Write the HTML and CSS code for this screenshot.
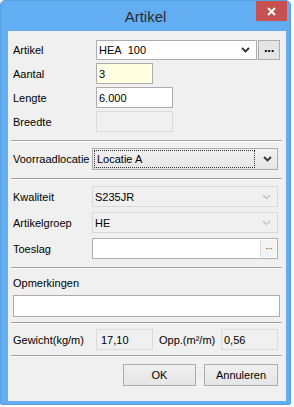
FILE: index.html
```html
<!DOCTYPE html>
<html lang="nl">
<head>
    <meta charset="UTF-8">
    <title>Artikel</title>
    <link rel="stylesheet" href="styles.css">
</head>
<body>
    <div class="window">
        <div class="titlebar">
            <span class="title">Artikel</span>
            <div class="close">
                <svg width="9" height="9" viewBox="0 0 9 9"><path d="M1 1 L8 8 M8 1 L1 8" stroke="#fff" stroke-width="2"/></svg>
            </div>
        </div>

        <div class="panel">
            <!-- artikel, aantal, lengte, breedte -->
            <div class="grid top">
                <label>Artikel</label>
                <div class="pair">
                    <div class="combo article">
                        <span class="value">HEA&nbsp;&nbsp;100</span>
                        <svg class="chev" width="9" height="6" viewBox="0 0 9 6"><path d="M1 1 L4.5 4.5 L8 1" fill="none" stroke="#333" stroke-width="1.8"/></svg>
                    </div>
                    <div class="dots-btn">&middot;&middot;&middot;</div>
                </div>

                <label>Aantal</label>
                <div class="field aantal">3</div>

                <label>Lengte</label>
                <div class="field wide">6.000</div>

                <label>Breedte</label>
                <div class="field wide disabled"></div>
            </div>

            <div class="sep first"></div>

            <div class="row location">
                <label>Voorraadlocatie</label>
                <div class="combo readonly">
                    <span class="focus">Locatie A</span>
                    <svg class="chev" width="9" height="6" viewBox="0 0 9 6"><path d="M1 1 L4.5 4.5 L8 1" fill="none" stroke="#333" stroke-width="1.8"/></svg>
                </div>
            </div>

            <div class="sep"></div>

            <div class="grid mid">
                <label>Kwaliteit</label>
                <div class="combo disabled">
                    <span class="value">S235JR</span>
                    <svg class="chev" width="9" height="6" viewBox="0 0 9 6"><path d="M1 1 L4.5 4.5 L8 1" fill="none" stroke="#c4c4c4" stroke-width="1.5"/></svg>
                </div>

                <label>Artikelgroep</label>
                <div class="combo disabled">
                    <span class="value">HE</span>
                    <svg class="chev" width="9" height="6" viewBox="0 0 9 6"><path d="M1 1 L4.5 4.5 L8 1" fill="none" stroke="#c4c4c4" stroke-width="1.5"/></svg>
                </div>

                <label>Toeslag</label>
                <div class="field toeslag">
                    <span class="mini-btn">&middot;&middot;&middot;</span>
                </div>
            </div>

            <div class="sep"></div>

            <label class="remarks-label">Opmerkingen</label>
            <div class="field remarks"></div>

            <div class="sep small"></div>

            <div class="row weights">
                <label class="w-label">Gewicht(kg/m)</label>
                <div class="field readout">17,10</div>
                <label class="o-label">Opp.(m&sup2;/m)</label>
                <div class="field readout opp">0,56</div>
            </div>

            <div class="sep small"></div>

            <div class="buttons">
                <button type="button">OK</button>
                <button type="button" class="cancel">Annuleren</button>
            </div>
        </div>
    </div>
</body>
</html>
```

FILE: styles.css
```css
body {
    margin: 0;
    background-color: #ffffff;
    font-family: "Liberation Sans", Arial, sans-serif;
    font-size: 11px;
    color: #000;
}

.window {
    width: 291px;
    height: 405px;
    background-color: #63adf2;
    border-radius: 5px 5px 2px 2px;
    box-sizing: border-box;
    border: 1px solid #5a9fe0;
}

.titlebar {
    position: relative;
    height: 30px;
    display: flex;
    align-items: center;
    justify-content: center;
}

.title {
    font-size: 15px;
    color: #2b2b2b;
    margin-top: 1px;
}

.close {
    position: absolute;
    top: 0;
    left: 255px;
    width: 31px;
    height: 20px;
    background-color: #c75050;
    display: flex;
    align-items: center;
    justify-content: center;
}

.panel {
    margin: 0 4px 0 7px;
    height: 370px;
    background-color: #f0f0f0;
    padding: 9px 6px 0 5px;
    box-sizing: border-box;
}

label {
    display: block;
    white-space: nowrap;
}

.grid {
    display: grid;
    align-items: center;
}

.grid.top {
    grid-template-columns: 83px auto;
    grid-template-rows: 20px 21px 21px 21px;
    row-gap: 3px;
}

.grid.mid {
    grid-template-columns: 79px 186px;
    grid-template-rows: 21px 21px 21px;
    row-gap: 5px;
}

.pair {
    display: flex;
    gap: 1px;
    height: 20px;
}

.field, .combo {
    box-sizing: border-box;
    border: 1px solid #adadad;
    background-color: #ffffff;
    height: 21px;
    display: flex;
    align-items: center;
    padding-left: 2px;
}

.combo {
    justify-content: space-between;
    padding-right: 6px;
}

.combo.article {
    width: 161px;
    height: 20px;
    border-color: #abadb3;
}

.dots-btn {
    width: 22px;
    height: 20px;
    box-sizing: border-box;
    border: 1px solid #acacac;
    background-color: #e5e5e5;
    font-weight: bold;
    font-size: 13px;
    letter-spacing: -1px;
    display: flex;
    align-items: center;
    justify-content: center;
    line-height: 1;
}

.field.aantal {
    width: 57px;
    background-color: #ffffe1;
}

.field.wide {
    width: 77px;
}

.field.disabled {
    background-color: #f0f0f0;
    border-color: #dadada;
}

.sep {
    border-top: 1px solid #a0a0a0;
    border-bottom: 1px solid #ffffff;
    margin: 8px -2px 6px -2px;
}

.sep.first {
    margin-top: 8px;
}

.row {
    display: flex;
    align-items: center;
}

.location label {
    width: 79px;
}

.combo.readonly {
    width: 186px;
    height: 22px;
    background: linear-gradient(#f2f2f2, #e5e5e5);
    border-color: #acacac;
    padding-left: 1px;
    padding-right: 5px;
}

.focus {
    flex: 1;
    height: 18px;
    box-sizing: border-box;
    border: 1px dotted #333;
    padding-left: 2px;
    margin-right: 8px;
    display: flex;
    align-items: center;
}

.combo.disabled {
    background-color: #f0f0f0;
    border-color: #d9d9d9;
}

.field.toeslag {
    justify-content: flex-end;
    padding: 0 1px 0 0;
}

.mini-btn {
    width: 16px;
    height: 17px;
    box-sizing: border-box;
    border-left: 1px solid #d6d6d6;
    background-color: #f4f4f4;
    color: #555;
    font-size: 10px;
    letter-spacing: -1px;
    display: flex;
    align-items: center;
    justify-content: center;
}

.remarks-label {
    margin-top: 8px;
    height: 13px;
    line-height: 13px;
}

.field.remarks {
    width: 267px;
    margin-top: 5px;
    height: 22px;
    border-color: #acacac;
}

.sep.small {
    margin: 5px -2px 5px -2px;
}

.weights {
    height: 21px;
}

.w-label {
    width: 83px;
}

.field.readout {
    width: 57px;
    background-color: #f0f0f0;
    border-color: #dadada;
    padding-left: 4px;
}

.o-label {
    width: 62px;
    margin-left: 6px;
}

.field.readout.opp {
    padding-left: 2px;
}

.buttons {
    display: flex;
    justify-content: flex-end;
    gap: 8px;
    margin-top: 7px;
    padding-right: 2px;
}

button {
    width: 73px;
    height: 22px;
    font-family: "Liberation Sans", Arial, sans-serif;
    font-size: 11px;
    color: #000;
    background: linear-gradient(#f0f0f0, #e5e5e5);
    border: 1px solid #acacac;
    border-radius: 0;
    padding: 0;
}

button.cancel {
    width: 74px;
}
```
